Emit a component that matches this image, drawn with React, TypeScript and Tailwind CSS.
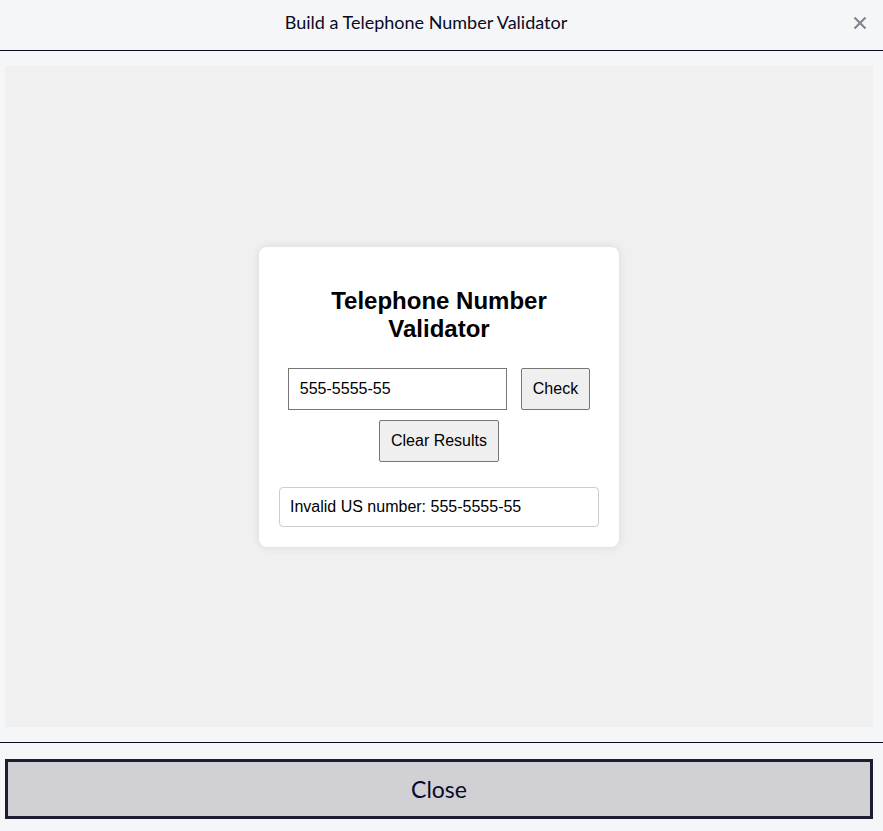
import React, { useState } from "react";

const validate = (value: string) => {
  const re = /^(1\s?)?(\(\d{3}\)|\d{3})[\s-]?\d{3}[\s-]?\d{4}$/;
  return re.test(value) ? `Valid US number: ${value}` : `Invalid US number: ${value}`;
};

const App: React.FC = () => {
  const [phone, setPhone] = useState("555-5555-55");
  const [result, setResult] = useState("Invalid US number: 555-5555-55");

  return (
    <div className="h-[831px] w-full flex flex-col bg-[#f5f6f7] text-[#0a0a23] font-['Lato','Liberation_Sans',sans-serif]">
      {/* Modal header */}
      <div className="h-[51px] shrink-0 flex items-center border-b border-[#0a0a23]">
        <h2 className="flex-1 text-center text-[18px] leading-none pb-[7px]">
          Build a Telephone Number Validator
        </h2>
        <button className="w-[16px] h-[16px] mr-[15px] mb-[4px] flex items-center justify-center text-[#858591]">
          <svg width="14" height="14" viewBox="0 0 14 14">
            <path d="M1.5 1.5 L12.5 12.5 M12.5 1.5 L1.5 12.5" stroke="currentColor" strokeWidth="2.2" strokeLinecap="butt" />
          </svg>
        </button>
      </div>

      {/* Preview */}
      <div className="flex-1 pt-[15px] pb-[15px] pl-[5px] pr-[10px] border-b border-[#0a0a23]">
        <div className="h-full bg-[#f0f0f0] flex items-center justify-center font-['Liberation_Sans',Arial,sans-serif] text-black">
          <div className="w-[360px] bg-white rounded-lg shadow-[0_0_10px_rgba(0,0,0,0.1)] px-[20px] pt-[40px] pb-[20px]">
            <h1 className="text-[24px] font-bold text-center leading-[28px]">
              Telephone Number
              <br />
              Validator
            </h1>
            <div className="mt-[25px] flex justify-center gap-[14px]">
              <input
                value={phone}
                onChange={(e) => setPhone(e.target.value)}
                className="w-[219px] h-[42px] border border-[#767676] px-[11px] text-[16px] outline-none"
              />
              <button
                onClick={() => setResult(validate(phone))}
                className="h-[42px] px-[11px] text-[16px] bg-[#efefef] border border-[#767676] rounded-[2px]"
              >
                Check
              </button>
            </div>
            <div className="mt-[10px] flex justify-center">
              <button
                onClick={() => setResult("")}
                className="h-[42px] px-[11px] text-[16px] bg-[#efefef] border border-[#767676] rounded-[2px]"
              >
                Clear Results
              </button>
            </div>
            <div className="mt-[25px] h-[40px] border border-[#cccccc] rounded-[4px] px-[10px] flex items-center text-[16px]">
              {result}
            </div>
          </div>
        </div>
      </div>

      {/* Footer */}
      <div className="h-[88px] shrink-0 pt-[16px] pl-[5px] pr-[10px]">
        <button className="w-full h-[60px] bg-[#d0d0d5] border-[3px] border-[#1b1b32] text-[23px] text-[#0a0a23]">
          Close
        </button>
      </div>
    </div>
  );
};

export default App;
